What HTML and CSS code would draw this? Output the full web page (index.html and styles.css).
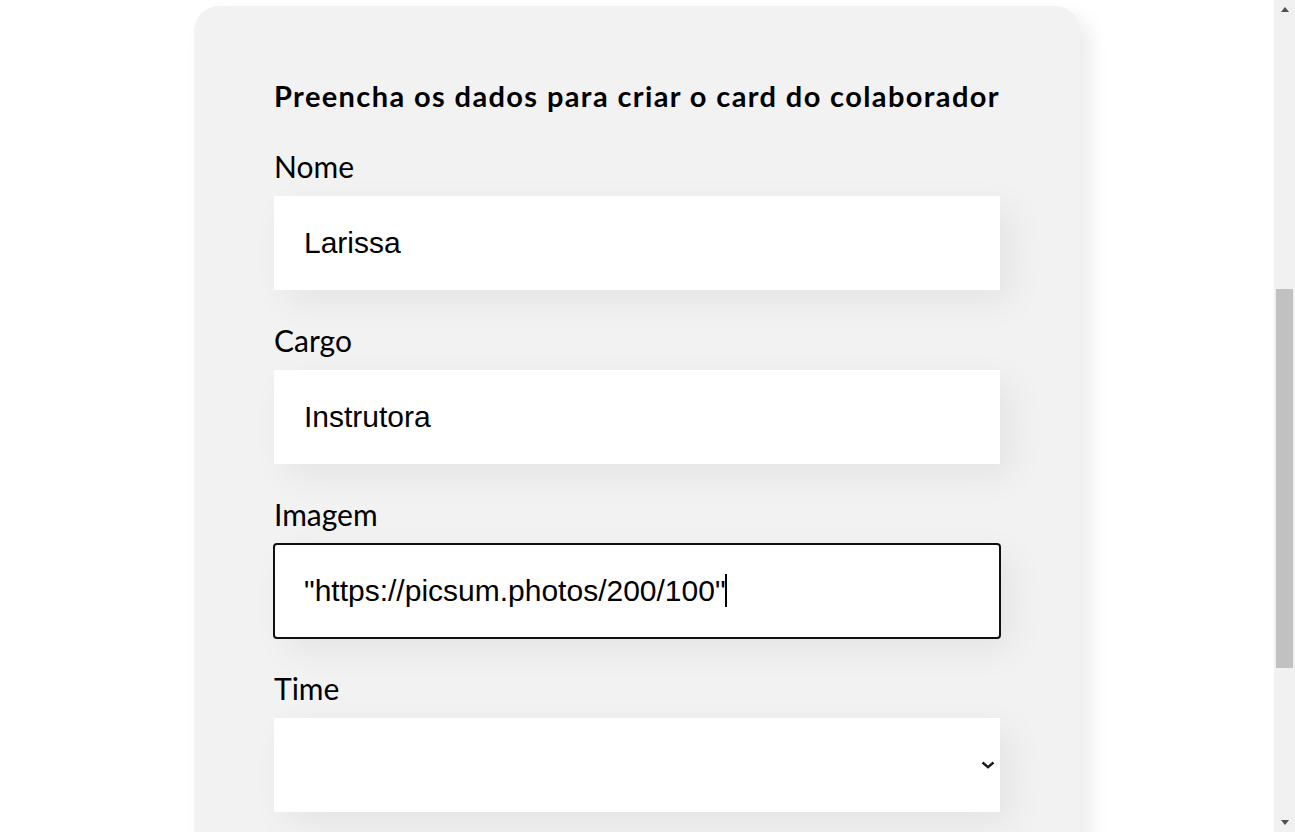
FILE: index.html
```html
<!DOCTYPE html>
<html lang="pt-BR">
<head>
<meta charset="utf-8">
<title>Organo</title>
<link rel="stylesheet" href="styles.css">
</head>
<body>
<header class="banner"></header>
<section class="formulario">
  <form class="form">
    <h2 class="form-title">Preencha os dados para criar o card do colaborador</h2>
    <div class="campo">
      <label class="campo-label" for="nome">Nome</label>
      <input class="campo-input" id="nome" type="text" value="Larissa">
    </div>
    <div class="campo">
      <label class="campo-label" for="cargo">Cargo</label>
      <input class="campo-input" id="cargo" type="text" value="Instrutora">
    </div>
    <div class="campo">
      <label class="campo-label" for="imagem">Imagem</label>
      <div class="input-wrap">
        <input class="campo-input campo-foco" id="imagem" type="text" value='"https://picsum.photos/200/100"'>
        <span class="caret" aria-hidden="true"></span>
      </div>
    </div>
    <div class="campo">
      <label class="campo-label" for="time">Time</label>
      <div class="input-wrap">
        <select class="campo-input campo-select" id="time">
          <option></option>
          <option>Programação</option>
          <option>Front-End</option>
          <option>Data Science</option>
        </select>
        <svg class="chevron" width="14" height="8" viewBox="0 0 14 8" aria-hidden="true">
          <path d="M1.5 1.5 L7 6.2 L12.5 1.5" fill="none" stroke="#1a1a1a" stroke-width="2.4"/>
        </svg>
      </div>
    </div>
    <button class="botao" type="button">Criar card</button>
  </form>
</section>
<div class="scrollbar" aria-hidden="true">
  <div class="scroll-btn"><span class="arrow arrow-up"></span></div>
  <div class="scroll-track"><div class="scroll-thumb"></div></div>
  <div class="scroll-btn"><span class="arrow arrow-down"></span></div>
</div>
<script src="script.js"></script>
</body>
</html>
```

FILE: styles.css
```css
html {
  background: #ffffff;
}

body {
  margin: 0 21px 0 0;
  font-family: "Lato", "Open Sans", sans-serif;
  color: #000000;
}

.banner {
  height: 514px;
}

.formulario {
  display: flex;
  justify-content: center;
  padding: 80px 0 152px;
}

.form {
  width: 726px;
  padding: 45px 80px;
  background: #f2f2f2;
  border-radius: 25px;
  box-shadow: 10px 10px 20px rgba(0, 0, 0, 0.08);
}

.form-title {
  margin: 25px 0;
  font-size: 29px;
  line-height: 40px;
  font-weight: 700;
  letter-spacing: 1.38px;
  white-space: nowrap;
}

.campo {
  margin: 30px 0;
}

.campo-label {
  display: block;
  margin-bottom: 10px;
  font-size: 30px;
  line-height: 40px;
}

.input-wrap {
  position: relative;
}

.campo-input {
  display: block;
  box-sizing: border-box;
  width: 100%;
  height: 94px;
  padding: 30px;
  border: none;
  border-radius: 0;
  background: #ffffff;
  box-shadow: 12px 12px 37px rgba(0, 0, 0, 0.06);
  font-family: "Liberation Sans", Arial, sans-serif;
  font-size: 30px;
  color: #000000;
  outline: none;
  caret-color: transparent;
}

.campo-foco {
  border-radius: 3px;
  outline: 2px solid #101010;
  outline-offset: -1px;
}

.caret {
  position: absolute;
  left: 451px;
  top: 30px;
  width: 2px;
  height: 33px;
  background: #000000;
}

.campo-select {
  appearance: none;
  -webkit-appearance: none;
}

.chevron {
  position: absolute;
  right: 5px;
  top: 43px;
  pointer-events: none;
}

.botao {
  display: block;
  padding: 40px;
  border: none;
  border-radius: 12px;
  background: #6278f7;
  color: #ffffff;
  font-family: "Lato", sans-serif;
  font-size: 22px;
  font-weight: 700;
}

.scrollbar {
  position: fixed;
  top: 0;
  right: 0;
  width: 21px;
  height: 100vh;
  display: flex;
  flex-direction: column;
  background: #f1f1f1;
}

.scroll-btn {
  height: 21px;
  display: flex;
  align-items: center;
  justify-content: center;
}

.scroll-track {
  flex: 1;
  padding: 268px 2px 0;
}

.scroll-thumb {
  height: 379px;
  background: #c1c1c1;
}

.arrow {
  width: 0;
  height: 0;
  border-left: 4px solid transparent;
  border-right: 4px solid transparent;
}

.arrow-up {
  border-bottom: 5px solid #505050;
  margin-top: -2px;
}

.arrow-down {
  border-top: 5px solid #505050;
  margin-top: 2px;
}
```

FILE: script.js
```js
var campo = document.getElementById('imagem');
var fim = campo.value.length;
campo.setSelectionRange(fim, fim);
document.documentElement.style.scrollBehavior = 'auto';
window.scrollTo(0, 588);
```
